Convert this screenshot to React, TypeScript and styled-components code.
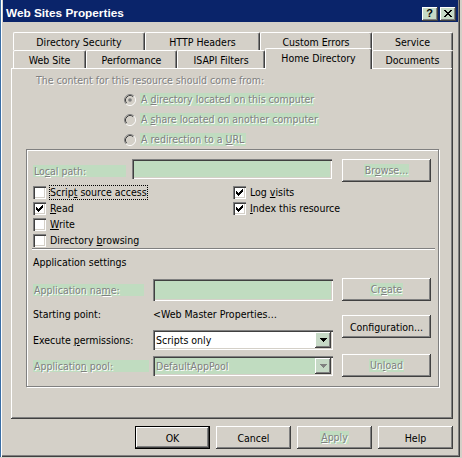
import React from 'react';
import styled, { createGlobalStyle, css } from 'styled-components';

const FACE = '#d4d0c8';
const SHADOW = '#808080';
const DARK = '#404040';
const MINT = '#c0dcc0';
const CAPTION = '#0a246a';

const GlobalStyle = createGlobalStyle`
  html, body {
    margin: 0;
    padding: 0;
    background: ${FACE};
  }
  body {
    font-family: "DejaVu Sans Condensed", "Liberation Sans", sans-serif;
    font-size: 10.5px;
    color: #000;
  }
  #root {
    width: 462px;
    height: 458px;
    overflow: hidden;
  }
  u {
    text-underline-offset: 1px;
  }
`;

const raised = css`
  box-shadow: inset -1px -1px ${DARK}, inset 1px 1px #fff, inset -2px -2px ${SHADOW};
`;

const sunken = css`
  box-shadow: inset 1px 1px ${SHADOW}, inset 2px 2px ${DARK}, inset -1px -1px #fff,
    inset -2px -2px ${FACE};
`;

const disabledText = css`
  color: ${SHADOW};
  text-shadow: 1px 1px 0 #fff;
`;

const Window = styled.div`
  width: 460px;
  height: 457px;
  box-sizing: border-box;
  border-left: 1px solid #3a6ea5;
  box-shadow: inset 1px 0 #fff, inset -1px -1px ${DARK}, inset -2px -2px ${SHADOW};
  display: flex;
  flex-direction: column;
`;

const TitleBar = styled.div`
  height: 22px;
  margin: 0 2px 0 2px;
  padding: 0 2px 0 3px;
  background: ${CAPTION};
  display: flex;
  justify-content: space-between;
  align-items: flex-start;
`;

const Title = styled.div`
  font-family: "Liberation Sans", sans-serif;
  font-weight: bold;
  font-size: 11.8px;
  line-height: 13px;
  color: #fff;
  margin-top: 7px;
  white-space: nowrap;
`;

const CaptionButtons = styled.div`
  display: flex;
  gap: 2px;
  margin-top: 7px;
`;

const CaptionButton = styled.div`
  width: 16px;
  height: 14px;
  box-sizing: border-box;
  background: #c6dac6;
  ${raised};
  display: flex;
  align-items: center;
  justify-content: center;
  font-family: "Liberation Sans", sans-serif;
  font-weight: bold;
  font-size: 11px;
  line-height: 11px;
  padding: 0 1px 1px 0;
`;

const Body = styled.div`
  padding: 10px 7px 0 10px;
  display: flex;
  flex-direction: column;
`;

const TabStrip = styled.div`
  padding-left: 2px;
  display: flex;
  flex-direction: column;
`;

const TabRow = styled.div`
  display: flex;
`;

const Tab = styled.div<{ $w: number; $selected?: boolean }>`
  width: ${p => p.$w}px;
  height: 18px;
  box-sizing: border-box;
  background: ${FACE};
  border-top: 1px solid #fff;
  border-left: 1px solid #fff;
  border-right: 1px solid ${DARK};
  border-radius: 2px 2px 0 0;
  box-shadow: inset -1px 0 ${SHADOW};
  display: flex;
  align-items: center;
  justify-content: center;
  white-space: nowrap;
  padding-top: 1px;
  ${p =>
    p.$selected &&
    css`
      height: 21px;
      margin-top: -2px;
      margin-bottom: -1px;
      padding: 0 0 3px;
      position: relative;
      z-index: 2;
    `}
`;

const Panel = styled.div`
  height: 351px;
  box-sizing: border-box;
  ${raised};
  padding: 6px 0 0 15px;
  display: flex;
  flex-direction: column;
`;

const Heading = styled.div`
  ${disabledText};
  line-height: 13px;
  margin-left: 10px;
`;

const RadioList = styled.div`
  margin: 6px 0 0 98px;
  display: flex;
  flex-direction: column;
  gap: 7px;
`;

const OptionRow = styled.div`
  display: flex;
  align-items: center;
  height: 13px;
  gap: 4px;
`;

const Shade = styled.span<{ $w?: number; $h?: number }>`
  ${disabledText};
  background: ${MINT};
  display: inline-block;
  box-sizing: border-box;
  ${p => (p.$w ? `width: ${p.$w}px;` : '')}
  height: ${p => p.$h ?? 13}px;
  line-height: ${p => p.$h ?? 13}px;
  padding: 0 1px;
  white-space: nowrap;
`;

const GroupBox = styled.div`
  margin-top: 3px;
  width: 413px;
  height: 238px;
  box-sizing: border-box;
  border: 1px solid ${SHADOW};
  box-shadow: inset 1px 1px #fff, 1px 1px #fff;
  padding: 9px 7px 0 6px;
  display: flex;
  flex-direction: column;
`;

const PathRow = styled.div`
  display: flex;
  align-items: flex-start;
`;

const TextBox = styled.div<{ $w: number; $h: number; $disabled?: boolean }>`
  width: ${p => p.$w}px;
  height: ${p => p.$h}px;
  box-sizing: border-box;
  background: ${p => (p.$disabled ? MINT : '#fff')};
  ${sunken};
`;

const PushButton = styled.button<{ $w: number; $top?: number; $default?: boolean }>`
  width: ${p => p.$w}px;
  height: 23px;
  margin-top: ${p => p.$top ?? 0}px;
  box-sizing: border-box;
  padding: 0;
  border: ${p => (p.$default ? '1px solid #000' : 'none')};
  background: ${FACE};
  ${raised};
  font: inherit;
  color: #000;
  display: flex;
  align-items: center;
  justify-content: center;
  white-space: nowrap;
`;

const ButtonShade = styled.span`
  ${disabledText};
  background: ${MINT};
  line-height: 13px;
  padding: 0 1px;
`;

const CheckGrid = styled.div`
  margin-top: 4px;
  display: grid;
  grid-template-columns: 200px 1fr;
  grid-auto-rows: 13px;
  row-gap: 3px;
`;

const CheckItem = styled.div<{ $col: number; $row: number }>`
  grid-column: ${p => p.$col};
  grid-row: ${p => p.$row};
  display: flex;
  align-items: center;
  gap: 3px;
  white-space: nowrap;
`;

const Box = styled.div`
  width: 13px;
  height: 13px;
  flex: none;
  box-sizing: border-box;
  background: #fff;
  ${sunken};
  display: flex;
  padding: 3px;
`;

const CheckText = styled.span<{ $focus?: boolean }>`
  line-height: 13px;
  padding: 0;
  border: 1px dotted ${p => (p.$focus ? '#000' : 'transparent')};
`;

const Separator = styled.div`
  margin: 1px -4px 0 -1px;
  border-top: 1px solid ${SHADOW};
  border-bottom: 1px solid #fff;
`;

const SectionTitle = styled.div`
  margin-top: 6px;
  line-height: 13px;
`;

const AppArea = styled.div`
  margin-top: 9px;
  display: flex;
  gap: 9px;
`;

const FieldColumn = styled.div`
  width: 300px;
  display: flex;
  flex-direction: column;
`;

const FieldRow = styled.div<{ $top: number; $h: number }>`
  margin-top: ${p => p.$top}px;
  height: ${p => p.$h}px;
  display: grid;
  grid-template-columns: 120px 180px;
  align-items: center;
  white-space: nowrap;
`;

const FieldLabel = styled.span`
  line-height: 13px;
`;

const ButtonColumn = styled.div`
  display: flex;
  flex-direction: column;
`;

const Select = styled.div<{ $disabled?: boolean }>`
  height: 20px;
  box-sizing: border-box;
  background: ${p => (p.$disabled ? MINT : '#fff')};
  ${sunken};
  padding: 2px;
  display: flex;
  align-items: center;
  justify-content: space-between;
  ${p => p.$disabled && disabledText};
`;

const SelectValue = styled.span`
  padding-left: 1px;
  line-height: 13px;
`;

const DropButton = styled.div`
  width: 16px;
  height: 16px;
  box-sizing: border-box;
  background: #c6d9c6;
  ${raised};
  display: flex;
  align-items: center;
  justify-content: center;
`;

const ButtonRow = styled.div`
  margin-top: 7px;
  display: flex;
  justify-content: flex-end;
  gap: 6px;
`;

const CheckMark = () => (
  <svg width="7" height="7" viewBox="0 0 7 7" shapeRendering="crispEdges">
    <path
      d="M0 2h1v3H0zM1 3h1v3H1zM2 4h1v3H2zM3 3h1v3H3zM4 2h1v3H4zM5 1h1v3H5zM6 0h1v3H6z"
      fill="#000"
    />
  </svg>
);

const Radio = ({ checked }: { checked?: boolean }) => (
  <svg width="12" height="12" viewBox="0 0 12 12">
    <circle cx="6" cy="6" r="4.2" fill={FACE} />
    <path d="M2.11 9.89A5.5 5.5 0 0 1 9.89 2.11" stroke={SHADOW} fill="none" />
    <path d="M2.82 9.18A4.5 4.5 0 0 1 9.18 2.82" stroke={DARK} fill="none" />
    <path d="M9.89 2.11A5.5 5.5 0 0 1 2.11 9.89" stroke="#fff" fill="none" />
    <path d="M9.18 2.82A4.5 4.5 0 0 1 2.82 9.18" stroke={FACE} fill="none" />
    {checked && <circle cx="6" cy="6" r="1.8" fill={SHADOW} />}
  </svg>
);

const Arrow = ({ color }: { color: string }) => (
  <svg width="7" height="4" viewBox="0 0 7 4" shapeRendering="crispEdges">
    <path d="M0 0h7v1H0zM1 1h5v1H1zM2 2h3v1H2zM3 3h1v1H3z" fill={color} />
  </svg>
);

const Check = ({
  col,
  row,
  checked,
  focus,
  children,
}: {
  col: number;
  row: number;
  checked?: boolean;
  focus?: boolean;
  children: React.ReactNode;
}) => (
  <CheckItem $col={col} $row={row}>
    <Box>{checked && <CheckMark />}</Box>
    <CheckText $focus={focus}>{children}</CheckText>
  </CheckItem>
);

const backTabs = [
  { label: 'Directory Security', w: 132 },
  { label: 'HTTP Headers', w: 115 },
  { label: 'Custom Errors', w: 112 },
  { label: 'Service', w: 81 },
];

const frontTabs = [
  { label: 'Web Site', w: 73 },
  { label: 'Performance', w: 91 },
  { label: 'ISAPI Filters', w: 88 },
  { label: 'Home Directory', w: 107, selected: true },
  { label: 'Documents', w: 81 },
];

export default function App() {
  return (
    <>
      <GlobalStyle />
      <Window>
        <TitleBar>
          <Title>Web Sites Properties</Title>
          <CaptionButtons>
            <CaptionButton>?</CaptionButton>
            <CaptionButton>
              <svg width="8" height="7" viewBox="0 0 8 7" shapeRendering="crispEdges">
                <path
                  d="M0 0h2v1H0zM6 0h2v1H6zM1 1h2v1H1zM5 1h2v1H5zM2 2h4v1H2zM3 3h2v1H3zM2 4h4v1H2zM1 5h2v1H1zM5 5h2v1H5zM0 6h2v1H0zM6 6h2v1H6z"
                  fill="#000"
                />
              </svg>
            </CaptionButton>
          </CaptionButtons>
        </TitleBar>

        <Body>
          <TabStrip>
            <TabRow>
              {backTabs.map(t => (
                <Tab key={t.label} $w={t.w}>
                  {t.label}
                </Tab>
              ))}
            </TabRow>
            <TabRow>
              {frontTabs.map(t => (
                <Tab key={t.label} $w={t.w} $selected={t.selected}>
                  {t.label}
                </Tab>
              ))}
            </TabRow>
          </TabStrip>

          <Panel>
            <Heading>The content for this resource should come from:</Heading>
            <RadioList>
              <OptionRow>
                <Radio checked />
                <Shade $w={174}>
                  A <u>d</u>irectory located on this computer
                </Shade>
              </OptionRow>
              <OptionRow>
                <Radio />
                <Shade $w={179}>
                  A <u>s</u>hare located on another computer
                </Shade>
              </OptionRow>
              <OptionRow>
                <Radio />
                <Shade $w={106}>
                  A redirection to a <u>U</u>RL
                </Shade>
              </OptionRow>
            </RadioList>

            <GroupBox>
              <PathRow>
                <Shade $w={93} $h={12} style={{ marginTop: 6, marginRight: 6 }}>
                  Lo<u>c</u>al path:
                </Shade>
                <TextBox $w={200} $h={20} $disabled />
                <PushButton $w={89} style={{ marginLeft: 10 }}>
                  <ButtonShade>
                    Br<u>o</u>wse...
                  </ButtonShade>
                </PushButton>
              </PathRow>

              <CheckGrid>
                <Check col={1} row={1} focus>
                  Scrip<u>t</u> source access
                </Check>
                <Check col={1} row={2} checked>
                  <u>R</u>ead
                </Check>
                <Check col={1} row={3}>
                  <u>W</u>rite
                </Check>
                <Check col={1} row={4}>
                  Directory <u>b</u>rowsing
                </Check>
                <Check col={2} row={1} checked>
                  Log <u>v</u>isits
                </Check>
                <Check col={2} row={2} checked>
                  <u>I</u>ndex this resource
                </Check>
              </CheckGrid>

              <Separator />
              <SectionTitle>Application settings</SectionTitle>

              <AppArea>
                <FieldColumn>
                  <FieldRow $top={1} $h={22}>
                    <Shade $w={111} $h={12}>
                      Application na<u>m</u>e:
                    </Shade>
                    <TextBox $w={180} $h={22} $disabled />
                  </FieldRow>
                  <FieldRow $top={7} $h={13}>
                    <FieldLabel>Starting point:</FieldLabel>
                    <FieldLabel>&lt;Web Master Properties…</FieldLabel>
                  </FieldRow>
                  <FieldRow $top={9} $h={20}>
                    <FieldLabel>
                      Execute <u>p</u>ermissions:
                    </FieldLabel>
                    <Select>
                      <SelectValue>Scripts only</SelectValue>
                      <DropButton>
                        <Arrow color="#000" />
                      </DropButton>
                    </Select>
                  </FieldRow>
                  <FieldRow $top={6} $h={20}>
                    <Shade $w={116} $h={12}>
                      Applicatio<u>n</u> pool:
                    </Shade>
                    <Select $disabled>
                      <SelectValue>DefaultAppPool</SelectValue>
                      <DropButton>
                        <Arrow color={SHADOW} />
                      </DropButton>
                    </Select>
                  </FieldRow>
                </FieldColumn>
                <ButtonColumn>
                  <PushButton $w={89}>
                    <ButtonShade>
                      Cr<u>e</u>ate
                    </ButtonShade>
                  </PushButton>
                  <PushButton $w={89} $top={14}>
                    Confi<u>g</u>uration...
                  </PushButton>
                  <PushButton $w={89} $top={16}>
                    <ButtonShade>
                      Un<u>l</u>oad
                    </ButtonShade>
                  </PushButton>
                </ButtonColumn>
              </AppArea>
            </GroupBox>
          </Panel>

          <ButtonRow>
            <PushButton $w={75} $default>
              OK
            </PushButton>
            <PushButton $w={75}>Cancel</PushButton>
            <PushButton $w={75}>
              <ButtonShade>
                <u>A</u>pply
              </ButtonShade>
            </PushButton>
            <PushButton $w={75}>Help</PushButton>
          </ButtonRow>
        </Body>
      </Window>
    </>
  );
}
